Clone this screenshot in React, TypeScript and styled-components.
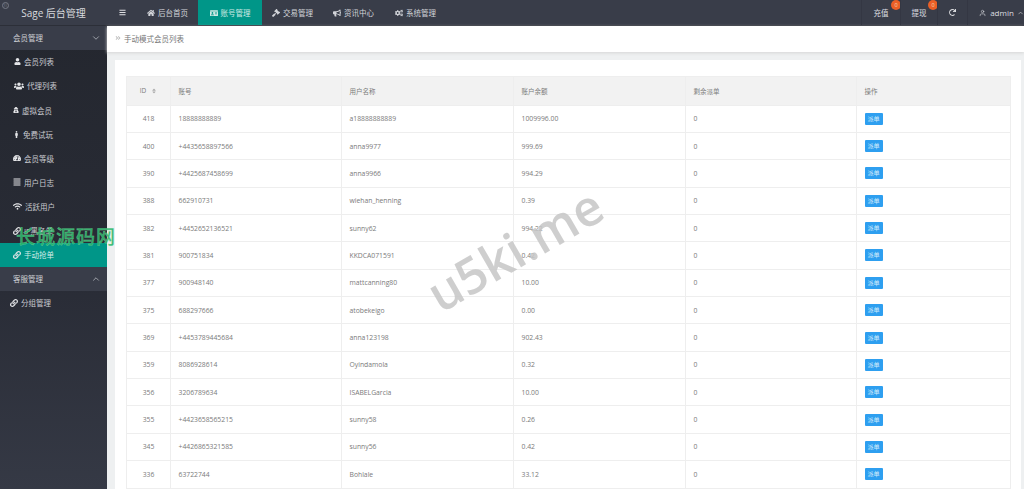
import React from "react";
import styled, { createGlobalStyle } from "styled-components";
import { FaHome, FaIdCard, FaGavel, FaBullhorn, FaCogs, FaUser, FaUsers, FaUserSecret, FaMale, FaTachometerAlt, FaAlignJustify, FaWifi, FaLink, FaRedo, FaBars, FaSort, FaAngleDoubleRight } from "react-icons/fa";
import { FiChevronDown, FiChevronUp, FiUser } from "react-icons/fi";

const Global = createGlobalStyle`
  html, body { margin: 0; height: 100%; overflow: hidden; background: #eef0f1; }
  body { font-family: "Open Sans", "Noto Sans CJK SC", sans-serif; }
  #root { height: 489px; }
  * { box-sizing: border-box; }
`;

const Page = styled.div`
  position: relative; width: 1024px; height: 489px; overflow: hidden;
  display: flex; flex-direction: column;
`;
const Top = styled.header`
  height: 26px; flex: none; display: flex; align-items: stretch;
  background: #393d49; color: #e6e7ea; border-bottom: 1px solid #2c2f38;
`;
const Logo = styled.div`
  width: 107px; flex: none; display: flex; align-items: center; justify-content: center;
  font-size: 10px; color: #d8dade; padding-bottom: 1px;
`;
const Badge = styled.span`
  position: absolute; left: 2px; top: 2px; width: 7px; height: 7px; border-radius: 50%;
  border: 1px solid #777b86; font-size: 4px; line-height: 5px; text-align: center; color: #8a8e98;
`;
const Burger = styled.div`
  width: 30px; flex: none; display: flex; align-items: center; justify-content: center; font-size: 7px; color: #dfe0e3;
`;
const NavItem = styled.div<{ $active?: boolean; $w: number }>`
  width: ${p => p.$w}px; flex: none; display: flex; align-items: center; justify-content: center; gap: 3px;
  font-size: 7.5px; color: ${p => (p.$active ? "#cfeae4" : "#d2d4d9")};
  background: ${p => (p.$active ? "#009688" : "transparent")};
  svg { font-size: 8px; }
`;
const Spacer = styled.div` flex: 1; `;
const RightItem = styled.div<{ $w: number }>`
  position: relative; width: ${p => p.$w}px; flex: none; display: flex; align-items: center; justify-content: center;
  gap: 3px; font-size: 7.5px; color: #dcdde0; border-left: 1px solid #343743;
`;
const UserItem = styled(RightItem)`
  justify-content: flex-start; padding-left: 11px;
`;
const AdminName = styled.span` font-size: 8px; margin-left: 1px; `;
const Count = styled.span`
  position: absolute; top: 0; right: -1px; width: 10px; height: 10px; border-radius: 50%;
  background: #ea5f26; color: #f7d9b8; font-size: 5.5px; line-height: 10px; text-align: center;
`;
const Body = styled.div` flex: 1; display: flex; min-height: 0; `;
const Side = styled.aside`
  width: 107px; flex: none; background: linear-gradient(#24272f, #292c36 55%, #353945); color: #d5d6da;
`;
const Group = styled.div`
  height: 24.3px; display: flex; align-items: center; justify-content: space-between;
  padding: 0 6px 1px 13px; font-size: 7.5px; background: #393d49; color: #cfd1d6;
  svg { font-size: 10px; color: #b0b3ba; }
`;
const Item = styled.div<{ $active?: boolean; $pad?: number }>`
  height: 24.1px; display: flex; align-items: center; gap: 3px; padding: 0 0 1px ${p => p.$pad ?? 13}px;
  font-size: 7.5px; color: ${p => (p.$active ? "#d0ece6" : "#c9cad0")};
  background: ${p => (p.$active ? "#009688" : "transparent")};
  svg { font-size: 8px; color: #e3e4e7; }
`;
const Main = styled.main` flex: 1; min-width: 0; display: flex; flex-direction: column; `;
const Crumb = styled.div`
  height: 26px; flex: none; display: flex; align-items: center; gap: 3px;
  padding: 0 0 2px 8px; background: #fff; font-size: 7.5px; color: #777; box-shadow: 0 1px 3px #d5d5d5;
  svg { font-size: 6px; color: #bbb; }
`;
const Card = styled.section`
  flex: none; margin: 8px 3px 0 8px; padding: 16px 11px 0 11px; background: #fff; height: 500px;
`;
const Table = styled.table`
  width: 884px; border-collapse: collapse; table-layout: fixed; font-size: 6.8px; color: #7a7a7a;
`;
const Th = styled.th`
  height: 28.5px; background: #f2f2f2; font-weight: 400; text-align: left; padding: 0 0 0 7.5px;
  border: 1px solid #eee; color: #7a7a7a; font-size: 6.5px;
  &:first-child { text-align: center; padding: 0; }
`;
const Td = styled.td`
  height: 27.36px; padding: 0 0 0 7.5px; border: 1px solid #eee; white-space: nowrap; overflow: hidden;
  &:first-child { text-align: center; padding: 0; }
`;
const Sort = styled(FaSort)`
  margin-left: 5px; font-size: 6px; color: #aaa; vertical-align: -0.5px;
`;
const Btn = styled.span`
  display: inline-block; width: 18px; height: 12px; line-height: 12px; text-align: center;
  background: #2e9ff0; color: #d6ecfb; font-size: 6px; border-radius: 1px; vertical-align: middle;
`;
const Mark = styled.div`
  position: absolute; left: 418px; top: 219px; transform: rotate(-30deg); transform-origin: center;
  font-family: "Open Sans", sans-serif; font-size: 50px; font-weight: 600; color: rgba(198,198,198,0.85);
  line-height: 60px; white-space: nowrap; pointer-events: none;
`;
const Mark2 = styled.div`
  position: absolute; left: 16px; top: 223px; font-size: 19px; font-weight: 500; letter-spacing: 1px;
  font-family: "Noto Sans CJK SC", sans-serif; color: #28b36a; line-height: 26px;
  -webkit-text-stroke: 0.3px #7fdc9f; white-space: nowrap; pointer-events: none; opacity: .9;
`;

const rows: [string, string, string, string][] = [
  ["418", "18888888889", "a18888888889", "1009996.00"],
  ["400", "+4435658897566", "anna9977", "999.69"],
  ["390", "+4425687458699", "anna9966", "994.29"],
  ["388", "662910731", "wiehan_henning", "0.39"],
  ["382", "+4452652136521", "sunny62", "994.22"],
  ["381", "900751834", "KKDCA071591", "0.42"],
  ["377", "900948140", "mattcanning80", "10.00"],
  ["375", "688297666", "atobekeigo", "0.00"],
  ["369", "+4453789445684", "anna123198", "902.43"],
  ["359", "8086928614", "Oyindamola", "0.32"],
  ["356", "3206789634", "ISABELGarcia", "10.00"],
  ["355", "+4423658565215", "sunny58", "0.26"],
  ["345", "+4426865321585", "sunny56", "0.42"],
  ["336", "63722744", "Bohlale", "33.12"],
];

const widths = [44, 171, 172, 172, 171, 154];

export default function App() {
  return (
    <Page>
      <Global />
      <Top>
        <Logo>Sage 后台管理</Logo>
        <Badge>©</Badge>
        <Burger><FaBars /></Burger>
        <NavItem $w={61}><FaHome />后台首页</NavItem>
        <NavItem $w={64} $active><FaIdCard />账号管理</NavItem>
        <NavItem $w={61}><FaGavel />交易管理</NavItem>
        <NavItem $w={61}><FaBullhorn />资讯中心</NavItem>
        <NavItem $w={63}><FaCogs />系统管理</NavItem>
        <Spacer />
        <RightItem $w={39}>充值<Count>0</Count></RightItem>
        <RightItem $w={37}>提现<Count>0</Count></RightItem>
        <RightItem $w={30}><FaRedo size={7} /></RightItem>
        <UserItem $w={57}><FiUser size={8} /><AdminName>admin</AdminName><FiChevronUp size={8} /></UserItem>
      </Top>
      <Body>
        <Side>
          <Group>会员管理<FiChevronDown /></Group>
          <Item $pad={14}><FaUser size={7} />会员列表</Item>
          <Item $pad={14}><FaUsers size={10} />代理列表</Item>
          <Item><FaUserSecret size={6} />虚拟会员</Item>
          <Item><FaMale size={7} />免费试玩</Item>
          <Item><FaTachometerAlt />会员等级</Item>
          <Item><FaAlignJustify />用户日志</Item>
          <Item><FaWifi size={9} />活跃用户</Item>
          <Item><FaLink />IP黑名单</Item>
          <Item $active><FaLink />手动抢单</Item>
          <Group>客服管理<FiChevronUp /></Group>
          <Item $pad={10}><FaLink />分组管理</Item>
        </Side>
        <Main>
          <Crumb><FaAngleDoubleRight />手动模式会员列表</Crumb>
          <Card>
            <Table>
              <colgroup>{widths.map((w, i) => <col key={i} style={{ width: w }} />)}</colgroup>
              <thead>
                <tr>
                  <Th>ID<Sort /></Th><Th>账号</Th><Th>用户名称</Th><Th>账户余额</Th><Th>剩余派单</Th><Th>操作</Th>
                </tr>
              </thead>
              <tbody>
                {rows.map(r => (
                  <tr key={r[0]}>
                    <Td>{r[0]}</Td><Td>{r[1]}</Td><Td>{r[2]}</Td><Td>{r[3]}</Td><Td>0</Td><Td><Btn>派单</Btn></Td>
                  </tr>
                ))}
              </tbody>
            </Table>
          </Card>
        </Main>
      </Body>
      <Mark>u5ki.me</Mark>
      <Mark2>长城源码网</Mark2>
    </Page>
  );
}
